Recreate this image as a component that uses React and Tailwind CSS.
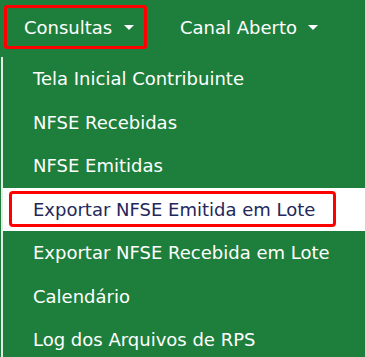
const items = [
  "Tela Inicial Contribuinte",
  "NFSE Recebidas",
  "NFSE Emitidas",
  "Exportar NFSE Emitida em Lote",
  "Exportar NFSE Recebida em Lote",
  "Calendário",
  "Log dos Arquivos de RPS",
];

const Caret = () => (
  <span className="inline-block w-0 h-0 border-l-[5px] border-r-[5px] border-t-[5px] border-l-transparent border-r-transparent border-t-white" />
);

export default function App() {
  return (
    <div className="w-[365px] h-[357px] overflow-hidden bg-[#1e7f3c] text-[18px] text-white font-['DejaVu_Sans',sans-serif]">
      {/* Top menu */}
      <nav className="flex items-start h-[57px] pt-[5px]">
        <div className="ml-[4px] h-[44px] w-[143px] flex items-center pl-[17px] border-[3px] border-[#ff0000] rounded-[3px]">
          <span>Consultas</span>
          <span className="ml-[12px] flex items-center">
            <Caret />
          </span>
        </div>
        <div className="ml-[33px] h-[44px] flex items-center">
          <span>Canal Aberto</span>
          <span className="ml-[11px] flex items-center">
            <Caret />
          </span>
        </div>
      </nav>

      {/* Dropdown */}
      <ul className="ml-[1px] border-l-[2px] border-[#e3ece5]">
        {items.map((item, i) =>
          i === 3 ? (
            <li key={i} className="h-[43.5px] bg-white flex items-center px-[6px]">
              <div className="h-[36px] w-[327px] flex items-center pl-[21px] border-[3px] border-[#ff0000] rounded-[4px] text-[#24285a]">
                {item}
              </div>
            </li>
          ) : (
            <li key={i} className="h-[43.5px] flex items-center pl-[30px]">
              {item}
            </li>
          )
        )}
      </ul>
    </div>
  );
}
